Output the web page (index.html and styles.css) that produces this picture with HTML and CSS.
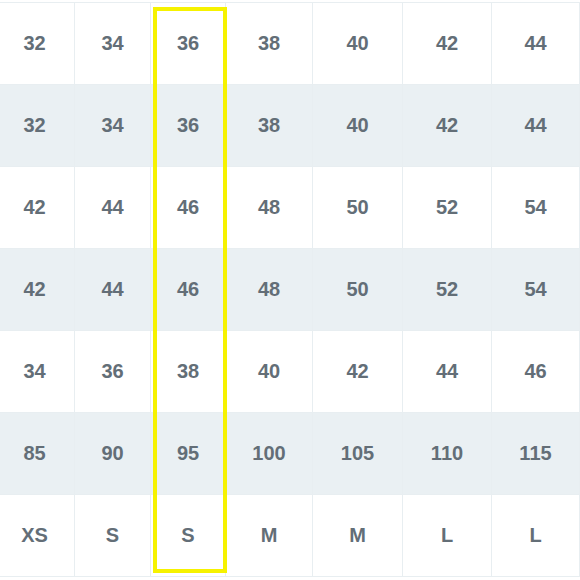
FILE: index.html
```html
<!DOCTYPE html>
<html>
<head>
<meta charset="utf-8">
<link rel="stylesheet" href="styles.css">
</head>
<body>
<div class="wrap">
  <table class="sizes">
    <colgroup>
      <col class="c1"><col class="c2"><col class="c3"><col class="c4"><col class="c5"><col class="c6"><col class="c7">
    </colgroup>
    <tbody>
      <tr><td>32</td><td>34</td><td>36</td><td>38</td><td>40</td><td>42</td><td>44</td></tr>
      <tr class="alt"><td>32</td><td>34</td><td>36</td><td>38</td><td>40</td><td>42</td><td>44</td></tr>
      <tr><td>42</td><td>44</td><td>46</td><td>48</td><td>50</td><td>52</td><td>54</td></tr>
      <tr class="alt"><td>42</td><td>44</td><td>46</td><td>48</td><td>50</td><td>52</td><td>54</td></tr>
      <tr><td>34</td><td>36</td><td>38</td><td>40</td><td>42</td><td>44</td><td>46</td></tr>
      <tr class="alt"><td>85</td><td>90</td><td>95</td><td>100</td><td>105</td><td>110</td><td>115</td></tr>
      <tr><td>XS</td><td>S</td><td>S</td><td>M</td><td>M</td><td>L</td><td>L</td></tr>
    </tbody>
  </table>
  <div class="highlight"></div>
</div>
</body>
</html>
```
FILE: styles.css
```css
html, body {
  margin: 0;
  padding: 0;
  background: #ffffff;
}
.wrap {
  position: relative;
  width: 580px;
  height: 580px;
  overflow: hidden;
}
.sizes {
  margin: 2px 0 0 -6px;
  border-collapse: collapse;
  table-layout: fixed;
  width: 585px;
  font-family: "Liberation Sans", Arial, sans-serif;
  font-size: 20px;
  font-weight: bold;
  color: #636e77;
}
.c1 { width: 80px; }
.c2 { width: 76px; }
.c3 { width: 75px; }
.c4 { width: 87px; }
.c5 { width: 90px; }
.c6 { width: 89px; }
.c7 { width: 88px; }
.sizes td {
  height: 81px;
  padding: 0;
  text-align: center;
  vertical-align: middle;
  border: 1px solid #e8eef1;
}
.sizes tr.alt td {
  background: #eaf0f3;
}
.highlight {
  position: absolute;
  left: 153px;
  top: 7px;
  width: 66px;
  height: 558px;
  border: 4px solid #f6f200;
}
```
